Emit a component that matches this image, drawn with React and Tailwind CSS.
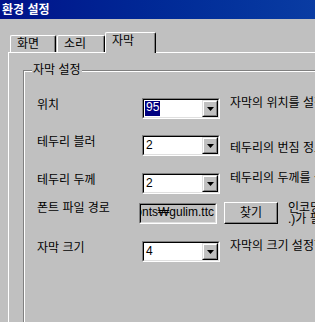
import React from 'react';

// classic sunken field border (outer grey/white, inner black/light grey)
function Sunken({ className = '', innerClass = '', children }) {
    return (
        <div className={`border border-t-[#808080] border-l-[#808080] border-b-white border-r-white ${className}`}>
            <div className={`h-full border border-t-black border-l-black border-b-[#dfdfdf] border-r-[#dfdfdf] ${innerClass}`}>
                {children}
            </div>
        </div>
    );
}

function Combo({ value, selected }) {
    return (
        <Sunken className="w-[78px] h-[21px] shrink-0" innerClass="bg-white flex">
            <div className="flex-1 flex items-stretch pl-[1px] pt-[1px] pb-[1px]">
                {selected ? (
                    <span className="bg-[#000080] text-white px-[1px] leading-[13px]">{value}</span>
                ) : (
                    <span className="px-[1px] leading-[14px]">{value}</span>
                )}
            </div>
            <div className="w-[16px] h-full border border-t-[#dfdfdf] border-l-[#dfdfdf] border-b-black border-r-black bg-[#c0c0c0]">
                <div className="h-full border border-t-white border-l-white border-b-[#808080] border-r-[#808080] flex items-center justify-center">
                    <svg width="7" height="4" viewBox="0 0 7 4">
                        <path d="M0 0h7L3.5 4z" fill="#000" />
                    </svg>
                </div>
            </div>
        </Sunken>
    );
}

export default function App() {
    const tabs = [
        { id: 'screen', label: '화면', w: 'w-[46px]', ml: 'ml-0' },
        { id: 'sound', label: '소리', w: 'w-[48px]', ml: 'ml-[1px]' },
    ];

    return (
        <div className="w-[315px] h-[322px] overflow-hidden bg-[#c0c0c0] text-black text-[12px] leading-[14px] font-['Liberation_Sans','Noto_Sans_CJK_KR',sans-serif] flex flex-col">
            {/* Title bar */}
            <div className="h-[19px] shrink-0 bg-gradient-to-r from-[#00118a] to-[#0a3ca3] pl-[2px] pt-[3px] text-white font-bold whitespace-nowrap">
                환경 설정
            </div>

            {/* Tabs */}
            <div className="h-[33px] shrink-0 flex items-end pl-[10px]">
                {tabs.map((t) => (
                    <div
                        key={t.id}
                        className={`${t.w} ${t.ml} h-[17px] border-t border-l border-r border-t-white border-l-white border-r-black rounded-t-[2px] shadow-[inset_-1px_0_0_#808080] pl-[6px] pt-[1px] whitespace-nowrap`}
                    >
                        {t.label}
                    </div>
                ))}
                <div className="relative z-10 w-[51px] h-[21px] -mb-[1px] bg-[#c0c0c0] border-t border-l border-r border-t-white border-l-white border-r-black rounded-t-[2px] shadow-[inset_-1px_0_0_#808080] pl-[6px] pt-[1px] whitespace-nowrap">
                    자막
                </div>
            </div>

            {/* Tab panel */}
            <div className="ml-[8px] flex-1 border-t border-l border-white">
                {/* Group box */}
                <div className="relative ml-[14px] mt-[17px] w-[400px] h-[400px] border-t border-l border-[#808080] shadow-[inset_1px_1px_0_#fff]">
                    <div className="absolute left-[8px] -top-[8px] px-[1px] bg-[#c0c0c0] whitespace-nowrap">자막 설정</div>

                    {/* 위치 */}
                    <div className="flex items-start mt-[27px] whitespace-nowrap">
                        <div className="ml-[13px] w-[105px]">위치</div>
                        <Combo value="95" selected />
                        <div className="ml-[10px] -mt-[2px]">자막의 위치를 설정합니다.</div>
                    </div>

                    {/* 테두리 블러 */}
                    <div className="flex items-start mt-[16px] whitespace-nowrap">
                        <div className="ml-[13px] w-[105px]">테두리 블러</div>
                        <Combo value="2" />
                        <div className="ml-[10px] mt-[6px]">테두리의 번짐 정도를 설정합니다.</div>
                    </div>

                    {/* 테두리 두께 */}
                    <div className="flex items-start mt-[17px] whitespace-nowrap">
                        <div className="ml-[13px] w-[105px]">테두리 두께</div>
                        <Combo value="2" />
                        <div className="ml-[10px] -mt-[2px]">테두리의 두께를 설정합니다.</div>
                    </div>

                    {/* 폰트 파일 경로 */}
                    <div className="flex items-start mt-[9px] whitespace-nowrap">
                        <div className="ml-[13px] w-[105px] -mt-[2px]">폰트 파일 경로</div>
                        <Sunken className="w-[78px] h-[21px] shrink-0" innerClass="bg-[#c0c0c0] flex justify-end overflow-hidden pr-[1px]">
                            <span className="leading-[15px]">C:₩WINDOWS₩Fonts₩gulim.ttc</span>
                        </Sunken>
                        <button className="ml-[7px] -mt-[1px] w-[54px] h-[22px] shrink-0 border border-t-white border-l-white border-b-black border-r-black shadow-[inset_-1px_-1px_0_#808080] flex items-center justify-center">
                            찾기
                        </button>
                        <div className="ml-[10px] leading-[11px]">
                            <div>인코딩된 폰트 파일(.ttf, .ttc</div>
                            <div>.)가 필요합니다.</div>
                        </div>
                    </div>

                    {/* 자막 크기 */}
                    <div className="flex items-start mt-[16px] whitespace-nowrap">
                        <div className="ml-[13px] w-[105px]">자막 크기</div>
                        <Combo value="4" />
                        <div className="ml-[10px] -mt-[2px]">자막의 크기 설정합니다.</div>
                    </div>
                </div>
            </div>
        </div>
    );
}
